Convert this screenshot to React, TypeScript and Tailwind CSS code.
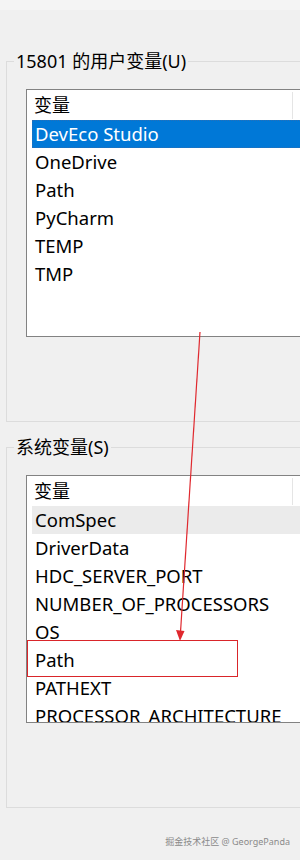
const userVars = ["DevEco Studio", "OneDrive", "Path", "PyCharm", "TEMP", "TMP"];
const sysVars = [
  "ComSpec",
  "DriverData",
  "HDC_SERVER_PORT",
  "NUMBER_OF_PROCESSORS",
  "OS",
  "Path",
  "PATHEXT",
  "PROCESSOR_ARCHITECTURE",
];

function VarList({ items, selected, hover }: { items: string[]; selected?: number; hover?: number }) {
  return (
    <div className="ml-[19px] mt-[16px] h-[248px] w-[300px] overflow-hidden border border-[#828282] bg-white">
      <div className="flex h-[30px] items-center">
        <div className="flex h-[27px] w-[266px] items-center border-r border-[#e5e5e5] pl-[7px] text-[18px] leading-[27px]">
          变量
        </div>
      </div>
      <div className="px-[5px]">
        {items.map((name, i) => (
          <div
            key={name}
            className={
              i === selected
                ? "h-[28px] border border-dotted border-[#2a6fb5] bg-[#0078d7] pl-[2px] text-[18.5px] leading-[26px] text-white"
                : i === hover
                ? "h-[28px] bg-[#ebebeb] pl-[3px] text-[18.5px] leading-[28px] text-black"
                : "h-[28px] pl-[3px] text-[18.5px] leading-[28px] text-black"
            }
          >
            {name}
          </div>
        ))}
      </div>
    </div>
  );
}

function GroupBox({ title, children, className }: { title: string; children: React.ReactNode; className: string }) {
  return (
    <div className={"ml-[6px] h-[361px] w-[320px] border border-[#dcdcdc] " + className}>
      <div className="ml-[7px] -mt-[13px] w-fit bg-[#f0f0f0] px-[2px] text-[18px] leading-[24px] text-black">
        {title}
      </div>
      {children}
    </div>
  );
}

export default function App() {
  return (
    <div className="relative h-[860px] w-[300px] overflow-hidden bg-[#f0f0f0] font-['Noto_Sans','Noto_Sans_CJK_SC',sans-serif] text-black">
      <div className="h-[10px] bg-[#f4f4f4]" />
      <GroupBox title="15801 的用户变量(U)" className="mt-[51px]">
        <VarList items={userVars} selected={0} />
      </GroupBox>
      <GroupBox title="系统变量(S)" className="mt-[25px]">
        <VarList items={sysVars} hover={0} />
      </GroupBox>
      <div className="mt-[28px] pr-[10px] text-right text-[9px] leading-[12px] text-[#8a8a8a]">
        掘金技术社区 @ GeorgePanda
      </div>

      {/* annotation: red box + arrow */}
      <div className="absolute left-[27px] top-[640px] h-[37px] w-[211px] border-[1.5px] border-[#d9252a]" />
      <svg className="absolute left-0 top-0" width="300" height="860" viewBox="0 0 300 860">
        <line x1="200" y1="332" x2="180.5" y2="632" stroke="#e0282e" strokeWidth="1.2" />
        <polygon points="176,630 184.5,631 180,641" fill="#e0282e" />
      </svg>
    </div>
  );
}
